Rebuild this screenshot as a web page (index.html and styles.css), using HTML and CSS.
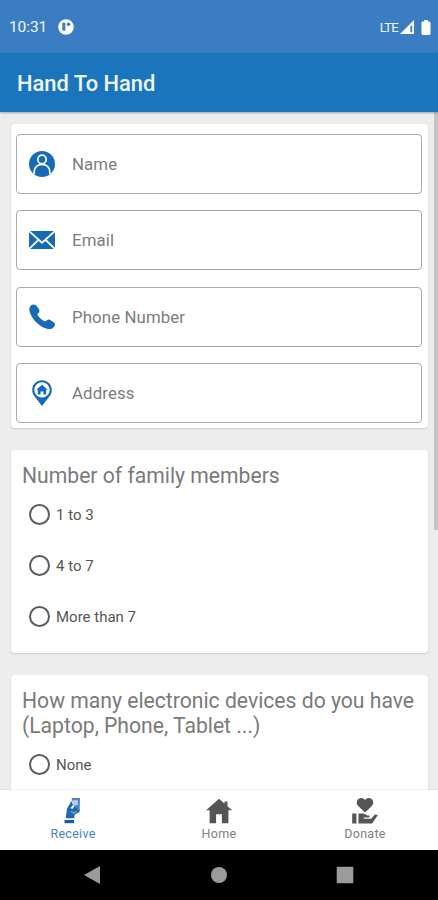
FILE: index.html
```html
<!DOCTYPE html>
<html lang="en">
<head>
<meta charset="utf-8">
<meta name="viewport" content="width=device-width, initial-scale=1">
<title>Hand To Hand</title>
<link rel="stylesheet" href="styles.css">
</head>
<body>
<div class="screen">
  <header class="status">
    <span class="time">10:31</span>
    <svg class="app-dot" viewBox="0 0 16 16"><circle cx="8" cy="8" r="7.8" fill="#fff"/><path d="M4.300 3.800h3v8h-1.500q-1.500 0-1.500-1.500z" fill="#3b7dc2"/><circle cx="10.500" cy="5.300" r="1.800" fill="#3b7dc2"/></svg>
    <span class="lte">LTE</span>
    <svg class="signal" viewBox="0 0 14 14"><path d="M0 14L14 0v14z" fill="#fff"/><path d="M10.400 5.600h1.800v6.600h-1.800z" fill="#3b7dc2"/></svg>
    <svg class="battery" viewBox="0 0 10 15"><path d="M3 0h4v1.5h1.2Q9.5 1.5 9.5 3v10.5Q9.5 15 8 15H2Q.5 15 .5 13.500V3Q.5 1.500 1.800 1.500H3z" fill="#fff"/></svg>
  </header>
  <div class="appbar"><h1>Hand To Hand</h1></div>
  <main class="content">
    <div class="scrollbar"></div>
    <section class="card fields">
      <div class="field">
        <svg viewBox="0 0 26 26"><circle cx="13" cy="13" r="13" fill="#176ab5"/><path d="M5.200 23.300v-3a7.800 7 0 0 1 15.600 0v3" fill="none" stroke="#fff" stroke-width="1.700"/><circle cx="13" cy="8.400" r="4.200" fill="#176ab5" stroke="#fff" stroke-width="1.700"/></svg>
        <span>Name</span>
      </div>
      <div class="field">
        <svg viewBox="0 0 26 26"><path d="M1.200 4h23.600L13 14.400zM0 5.200l8.300 7.600L0 20.700zM26 5.200l-8.300 7.600 8.300 7.900zM9.700 14l3.300 2.900 3.300-2.900 8.500 8H1.200z" fill="#176ab5"/></svg>
        <span>Email</span>
      </div>
      <div class="field">
        <svg viewBox="0 0 26 26"><path d="M2.300 1.200C3.600.1 6 .2 7.300 1.400L10 5.300c.8 1.200.6 2.900-.5 3.700L8.300 10.200c1.200 3 4.700 6.200 8.100 7.300l1.500-1.200c1-.9 2.400-1 3.500-.2l3.800 2.700c1.100.9 1.100 2.500 0 3.600l-1.300 1.500c-1.700 1.600-4.300 1.400-6.700.6C9.600 22 3 14.800.8 8.200.1 5.700 0 3.200 2.300 1.200z" fill="#176ab5"/></svg>
        <span>Phone Number</span>
      </div>
      <div class="field">
        <svg viewBox="0 0 26 26"><path d="M13 .2C7.500.2 3.200 4.500 3.200 9.900c0 2.700 1.100 4.800 2.600 6.800L13 25.900l7.200-9.200c1.500-2 2.600-4.100 2.600-6.800C22.800 4.500 18.500.2 13 .2zM13 2.200a7.700 7.700 0 1 1 0 15.400 7.700 7.700 0 0 1 0-15.400z" fill="#176ab5" fill-rule="evenodd"/><path d="M13 4.700l5.700 5.100h-1.500v4.700h-2.800v-3h-2.800v3H8.800V9.800H7.300z" fill="#176ab5"/></svg>
        <span>Address</span>
      </div>
    </section>
    <section class="card question">
      <h2>Number of family members</h2>
      <div class="option"><i></i><span>1 to 3</span></div>
      <div class="option"><i></i><span>4 to 7</span></div>
      <div class="option"><i></i><span>More than 7</span></div>
    </section>
    <section class="card question">
      <h2>How many electronic devices do you have (Laptop, Phone, Tablet ...)</h2>
      <div class="option"><i></i><span>None</span></div>
    </section>
  </main>
  <nav class="tabs">
    <div class="tab active">
      <svg viewBox="0 0 26 26"><path d="M11.500 0h8.500l-.4 14h-4z" fill="#4f83c4"/><path d="M13 2.300h5l-.2 5H13z" fill="#b9d0ea"/><path d="M11.500 3L7 10.500l-1.300 9.700h8.600l.4-3.600 4.400-2.400.6-2.600-2.600.4.200-2.300-3.300-.6-1.700 2-1.800-1.200 2.500-3z" fill="#1f68b4"/><path d="M11 13.500l2.500 1.500 3-1.600" fill="none" stroke="#a9c8e8"/><path d="M4.500 22H14v3.200H4.500z" fill="#1b5da8"/></svg>
      <span>Receive</span>
    </div>
    <div class="tab">
      <svg viewBox="0 0 26 26"><path d="M13 .8l5.500 4.800V3.500h3v4.700L26 12.200h-3.600v13h-6.500v-9h-5.800v9H3.600v-13H0z" fill="#555"/></svg>
      <span>Home</span>
    </div>
    <div class="tab">
      <svg viewBox="0 0 26 26"><path d="M13 14.500L6.200 8C3.300 4.900 5.200 0 9.300 0 11 0 12.300.9 13 2.200 13.700.9 15 0 16.700 0c4.100 0 6 4.900 3.100 8z" fill="#555"/><path d="M.2 15.500h4.200v10H.2zM6.500 15.500h5l4 2h2v2h-5.700v1.200h7.400l3.700-4.200 3 .6-5.800 8.400H6.500z" fill="#555"/></svg>
      <span>Donate</span>
    </div>
  </nav>
  <footer class="system">
    <svg viewBox="0 0 18 20"><path d="M1 10L17 1v18z" fill="#9b9b9b"/></svg>
    <svg viewBox="0 0 18 20"><circle cx="9" cy="10" r="8" fill="#9b9b9b"/></svg>
    <svg viewBox="0 0 18 20"><rect x=".7" y="1.700" width="16.600" height="16.600" rx="1" fill="#9b9b9b"/></svg>
  </footer>
</div>
</body>
</html>
```
FILE: styles.css
```css
* { box-sizing: border-box; }
body { margin: 0; font-family: Roboto, "Liberation Sans", sans-serif; }
svg { display: block; flex: none; }
h1, h2 { margin: 0; }
.screen { width: 438px; height: 900px; display: flex; flex-direction: column; overflow: hidden; background: #ededed; }
.status { flex: none; height: 53px; display: flex; align-items: center; padding: 1px 7px 0 9px; background: #3b7dc2; color: #f2f8ff; }
.time { font-size: 15.5px; width: 49px; letter-spacing: -0.1px; }
.app-dot { width: 16px; height: 16px; }
.lte { margin-left: auto; font-size: 13px; letter-spacing: -0.7px; }
.signal { width: 14px; height: 14px; margin-left: 2px; }
.battery { width: 10px; height: 15px; margin-left: 7px; }
.appbar { flex: none; height: 59px; padding: 2px 17px 0; display: flex; align-items: center; background: #1b75bc; color: #eff6fd; box-shadow: 0 1px 2px rgba(0, 0, 0, .3); z-index: 1; }
h1 { font-size: 21.900px; font-weight: 500; line-height: 26px; }
.content { position: relative; flex: 1; min-height: 0; overflow: hidden; padding: 12px 10px 0 11px; display: flex; flex-direction: column; gap: 22px; }
.scrollbar { position: absolute; top: 0; right: 0; width: 4px; height: 418px; background: #c4c4c4; }
.card { flex: none; background: #fff; border-radius: 4px; box-shadow: 0 1px 2px rgba(0, 0, 0, .14); }
.fields { height: 304px; padding: 10px 6px 0 5px; display: flex; flex-direction: column; gap: 16.400px; }
.field { height: 60px; flex: none; border: 1.500px solid #aaa; border-radius: 4px; display: flex; align-items: center; padding-left: 12px; color: #7c7c7c; font-size: 16.800px; letter-spacing: .12px; }
.field svg { width: 26px; height: 26px; margin-right: 17px; }
.question { height: 203px; padding: 13px 4px 0 11px; }
h2 { font-size: 21.150px; font-weight: 400; line-height: 25px; color: #7a7a7a; margin-bottom: 1px; }
.option { height: 51px; display: flex; align-items: center; padding-left: 7px; font-size: 15px; color: #555; }
.option i { width: 21px; height: 21px; border: 2px solid #5c5c5c; border-radius: 50%; margin-right: 6px; }
.tabs { flex: none; height: 60px; background: #fff; display: flex; box-shadow: 0 -1px 1px rgba(0, 0, 0, .04); z-index: 1; }
.tab { flex: 1; display: flex; flex-direction: column; align-items: center; padding-top: 8px; font-size: 12.500px; line-height: 16px; letter-spacing: .3px; color: #808080; }
.tab svg { width: 26px; height: 26px; margin-bottom: 2px; }
.active { color: #4a80c4; }
.system { flex: none; height: 50px; background: #000; display: flex; align-items: center; justify-content: space-between; padding: 0 84px 0 83px; }
.system svg { width: 18px; height: 20px; }
```
